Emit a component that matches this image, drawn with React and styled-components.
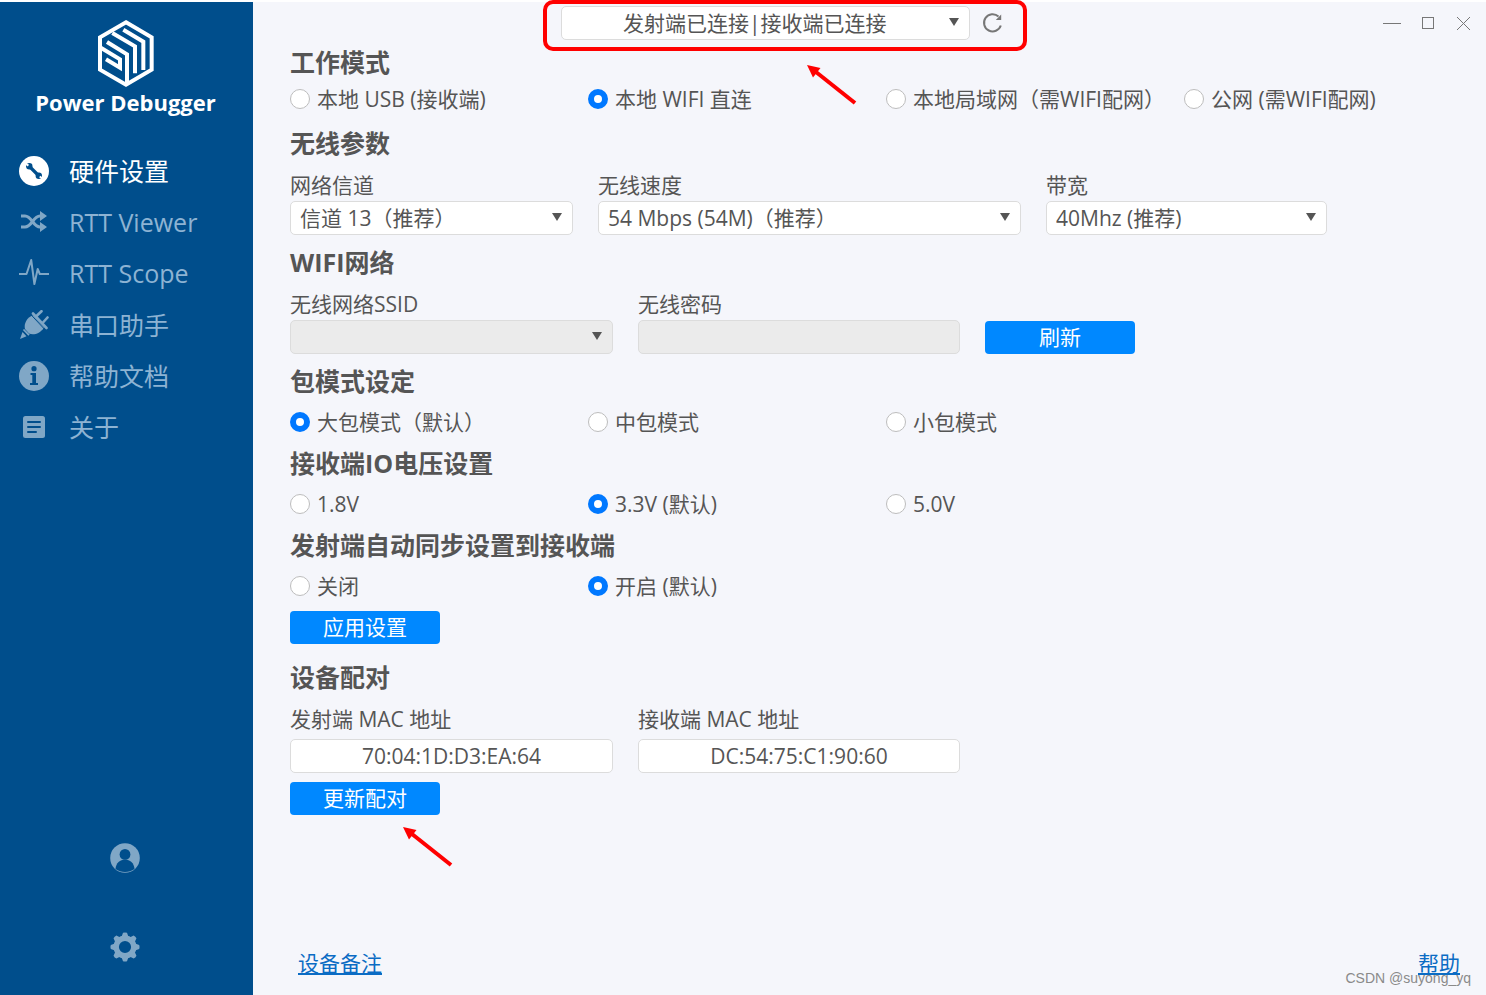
import React from "react";
import styled, { createGlobalStyle, css } from "styled-components";

const GlobalStyle = createGlobalStyle`
  *, *::before, *::after { box-sizing: border-box; }
  body {
    margin: 0;
    background: #fff;
    color: #555;
    font-family: "Open Sans", "Noto Sans CJK SC", sans-serif;
    font-size: 21px;
    line-height: 32px;
  }
  button, input, select { font: inherit; color: inherit; margin: 0; }
`;

const Window = styled.div`
  display: flex;
  min-height: 100vh;
  padding-top: 2px;
`;

/* ---------- Sidebar ---------- */

const Sidebar = styled.aside`
  flex: 0 0 253px;
  display: flex;
  flex-direction: column;
  background: #004e8c;
  color: #8db3d3;
`;

const Brand = styled.div`
  display: flex;
  flex-direction: column;
  align-items: center;
  padding: 18px 2px 0 0;
  color: #fff;
`;

const BrandName = styled.h1`
  margin: 0;
  font-size: 22px;
  line-height: 30px;
  font-weight: 700;
  white-space: nowrap;
`;

const Nav = styled.nav`
  display: grid;
  grid-auto-rows: 1fr;
  height: 308px;
  margin-top: 28px;
`;

const NavItem = styled.a`
  display: flex;
  align-items: center;
  gap: 20px;
  padding-left: 19px;
  font-size: 25px;
  text-decoration: none;
  white-space: nowrap;
  color: ${({ $active }) => ($active ? "#fff" : "#8db3d3")};

  svg {
    flex: none;
    color: ${({ $active }) => ($active ? "#fff" : "#80a7c6")};
  }
`;

const SidebarTools = styled.div`
  display: flex;
  flex-direction: column;
  align-items: center;
  gap: 59px;
  margin-top: auto;
  padding: 0 3px 33px 0;
`;

const IconButton = styled.button`
  display: flex;
  padding: 0;
  border: 0;
  background: none;
  color: ${({ $tone }) => $tone || "#80a7c6"};
  cursor: pointer;
`;

/* ---------- Main ---------- */

const Main = styled.main`
  flex: 1;
  min-width: 0;
  display: flex;
  flex-direction: column;
  background: #f5f6fb;
`;

const TitleBar = styled.header`
  display: flex;
  justify-content: space-between;
  align-items: flex-start;
  height: 40px;
  padding: 4px 13px 0 25%;
`;

const Connection = styled.div`
  position: relative;
  display: flex;
  align-items: center;
  gap: 12px;
`;

const Highlight = styled.div`
  position: absolute;
  inset: -6px -24px -11px -18px;
  border: 4px solid #f00;
  border-radius: 10px;
  pointer-events: none;
`;

const PointerArrow = styled.svg`
  position: absolute;
  left: ${({ $left }) => $left};
  top: ${({ $top }) => $top};
  pointer-events: none;
`;

const WindowControls = styled.div`
  display: flex;
  gap: 20px;
  padding-top: 8px;
`;

const Settings = styled.form`
  padding-left: 37px;
`;

const Section = styled.section`
  margin-bottom: ${({ $gap }) => $gap || "0"};
`;

const Heading = styled.h2`
  margin: 0;
  font-size: 25px;
  line-height: 40px;
  font-weight: 700;
`;

const RadioGroup = styled.div`
  display: grid;
  grid-template-columns: repeat(4, 1fr);
  max-width: 1192px;
  height: ${({ $compact }) => ($compact ? "34px" : "42px")};
  align-items: center;
`;

const RadioLabel = styled.label`
  display: flex;
  align-items: center;
  gap: 7px;
  white-space: nowrap;
`;

const RadioInput = styled.input`
  appearance: none;
  flex: none;
  width: 20px;
  height: 20px;
  border: 1px solid #bdbdbd;
  border-radius: 50%;
  background: #fff;

  &:checked {
    border: 6px solid #0078ff;
  }
`;

const FieldRow = styled.div`
  display: grid;
  grid-template-columns: ${({ $columns }) => $columns};
  max-width: ${({ $max }) => $max};
  gap: 25px;
  align-items: end;
  padding-top: 6px;
`;

const Field = styled.div`
  display: flex;
  flex-direction: column;
  gap: ${({ $gap }) => $gap || "0"};
  min-width: 0;
`;

const control = css`
  width: 100%;
  height: 34px;
  border: 1px solid #dcdcdc;
  border-radius: 5px;
  background: #fff;
  color: #555;
  opacity: 1;

  &:disabled { background: #ebebeb; }
`;

const TextInput = styled.input`
  ${control}
  padding: 0 8px;
  text-align: center;
`;

const SelectBox = styled.div`
  position: relative;
  display: flex;
  width: ${({ $width }) => $width || "100%"};

  &::after {
    content: "";
    position: absolute;
    right: 11px;
    top: 12px;
    border: 5px solid transparent;
    border-top: 8px solid #555;
    border-bottom: 0;
    pointer-events: none;
  }
`;

const SelectInput = styled.select`
  ${control}
  appearance: none;
  padding: ${({ $centered }) => ($centered ? "0 30px 0 8px" : "0 30px 0 9px")};
  text-align-last: ${({ $centered }) => ($centered ? "center" : "left")};
`;

const PrimaryButton = styled.button`
  position: relative;
  display: block;
  width: 150px;
  height: 33px;
  margin-top: ${({ $top }) => $top || "0"};
  padding: 0;
  border: 0;
  border-radius: 4px;
  background: #0088ff;
  color: #fff;
  line-height: 33px;
`;

const Footer = styled.footer`
  display: flex;
  justify-content: space-between;
  margin-top: auto;
  padding: 0 26px 16px 45px;
`;

const FooterLink = styled.a`
  color: #0b6cc4;
  text-underline-offset: 2px;
`;

const HelpArea = styled.div`
  position: relative;
`;

const Watermark = styled.span`
  position: absolute;
  right: -11px;
  top: 21px;
  font-family: "Liberation Sans", sans-serif;
  font-size: 14px;
  line-height: 20px;
  color: #8a8a8a;
  white-space: nowrap;
`;

/* ---------- Drawings ---------- */

const Logo = () => (
  <svg width="56" height="67" viewBox="0 0 168 201" fill="none" stroke="currentColor" strokeWidth="12" aria-hidden="true">
    <path d="M84 7 161 52V149L84 194 6 149V52Z" />
    <path d="M43 39 111 79V160" />
    <path d="M76 29 136 65V150" />
    <path d="M27 66 87 103V194" />
    <path d="M6 82 66 118V143L24 118" />
  </svg>
);

const WrenchIcon = () => (
  <svg width="30" height="30" viewBox="0 0 30 30" aria-hidden="true">
    <circle cx="15" cy="15" r="15" fill="currentColor" />
    <path d="M10 10 20 20" stroke="#004e8c" strokeWidth="3.2" />
    <circle cx="10.3" cy="10.3" r="3.2" fill="#004e8c" />
    <circle cx="19.8" cy="19.8" r="3.2" fill="#004e8c" />
    <path d="M6 7 9.4 9.6M20.7 20.5 24 23" stroke="currentColor" strokeWidth="2" />
  </svg>
);

const ShuffleIcon = () => (
  <svg width="30" height="30" viewBox="0 0 30 30" fill="none" stroke="currentColor" strokeWidth="3" aria-hidden="true">
    <path d="M2 9H6C13 9 14 20 21 20H23M2 20H6C13 20 14 9 21 9H23" />
    <path d="M21 4 28 9 21 14ZM21 15 28 20 21 25Z" fill="currentColor" stroke="none" />
  </svg>
);

const PulseIcon = () => (
  <svg width="30" height="30" viewBox="0 0 30 30" fill="none" stroke="currentColor" strokeWidth="2" strokeLinejoin="round" aria-hidden="true">
    <path d="M0 16H7.5L12.2 2 15.4 26 18.7 11 20.8 16H30" />
  </svg>
);

const PlugIcon = () => (
  <svg width="30" height="30" viewBox="0 0 30 30" fill="none" stroke="currentColor" aria-hidden="true">
    <path d="M14 5.5 25 17.5C21 24 14 25.5 10 23.5L6 19C4.500 14 8 7 14 5.500Z" fill="currentColor" stroke="none" />
    <path d="M14 3.500 27.500 18M17.500 6 22.500 1.200M24 12.500 28.500 7.500" strokeWidth="2.600" strokeLinecap="round" />
    <path d="M4.500 19.500 10 25.200" strokeWidth="1.800" />
    <path d="M3.500 22 7.500 26.200 1 29Z" fill="currentColor" stroke="none" />
    <path d="M12.500 5.300 25.500 19.200" stroke="#004e8c" strokeWidth="1" />
  </svg>
);

const InfoIcon = () => (
  <svg width="30" height="30" viewBox="0 0 30 30" aria-hidden="true">
    <circle cx="15" cy="15" r="15" fill="currentColor" />
    <circle cx="15" cy="7.7" r="2.6" fill="#004e8c" />
    <path d="M11.5 12H17V22H19V24H11V22H13.3V14H11.5Z" fill="#004e8c" />
  </svg>
);

const DocIcon = () => (
  <svg width="30" height="30" viewBox="0 0 30 30" aria-hidden="true">
    <rect x="4" y="4" width="22" height="22" rx="2.5" fill="currentColor" />
    <path d="M9 10H21M9 15H21M9 20H17" stroke="#004e8c" strokeWidth="2" strokeLinecap="round" />
  </svg>
);

const UserIcon = () => (
  <svg width="30" height="30" viewBox="0 0 30 30" aria-hidden="true">
    <circle cx="15" cy="15" r="14.8" fill="currentColor" />
    <circle cx="15" cy="11.4" r="5.4" fill="#004e8c" />
    <path d="M5.500 26C6 20 10 16.500 15 16.500S24 20 24.500 26C19 30 11 30 5.500 26Z" fill="#004e8c" />
  </svg>
);

const GearIcon = () => (
  <svg width="30" height="30" viewBox="0 0 30 30" fill="none" stroke="currentColor" aria-hidden="true">
    <circle cx="15" cy="15" r="8.800" strokeWidth="5.400" />
    {[0, 45, 90, 135].map((angle) => (
      <path
        key={angle}
        d="M11.500 5 13 .8Q15 0 17 .8L18.500 5ZM11.500 25 13 29.200Q15 30 17 29.200L18.500 25Z"
        transform={`rotate(${angle} 15 15)`}
        fill="currentColor"
        stroke="none"
      />
    ))}
  </svg>
);

const RefreshIcon = () => (
  <svg width="21" height="22" viewBox="0 0 21 22" fill="none" stroke="currentColor" strokeWidth="2" aria-hidden="true">
    <path d="M18.800 13.500A8.600 8.600 0 1 1 16.500 4.500" />
    <path d="M19.200 2.500V8H13.800Z" fill="currentColor" stroke="none" />
  </svg>
);

const MinimizeIcon = () => (
  <svg width="18" height="18" viewBox="0 0 18 18" stroke="currentColor" aria-hidden="true">
    <path d="M0 9.5H18" />
  </svg>
);

const MaximizeIcon = () => (
  <svg width="14" height="18" viewBox="0 0 14 18" fill="none" stroke="currentColor" aria-hidden="true">
    <rect x="1.5" y="3.5" width="11" height="11" />
  </svg>
);

const CloseIcon = () => (
  <svg width="18" height="18" viewBox="0 0 18 18" stroke="currentColor" aria-hidden="true">
    <path d="M2 3 15 16M15 3 2 16" />
  </svg>
);

const Arrow = ({ left, top }) => (
  <PointerArrow $left={left} $top={top} width="50" height="40" viewBox="0 0 50 40" aria-hidden="true">
    <path d="M48 38 9 7" stroke="#f00" strokeWidth="4" />
    <path d="M0 0 13.5 3 6 12.5Z" fill="#f00" />
  </PointerArrow>
);

/* ---------- Composed parts ---------- */

const Radio = ({ name, children, checked }) => (
  <RadioLabel>
    <RadioInput type="radio" name={name} defaultChecked={checked} />
    {children}
  </RadioLabel>
);

const Select = ({ id, value, centered, disabled, width, label }) => (
  <SelectBox $width={width}>
    <SelectInput id={id} $centered={centered} disabled={disabled} aria-label={label}>
      <option>{value}</option>
    </SelectInput>
  </SelectBox>
);

const navItems = [
  { label: "硬件设置", Icon: WrenchIcon, active: true },
  { label: "RTT Viewer", Icon: ShuffleIcon },
  { label: "RTT Scope", Icon: PulseIcon },
  { label: "串口助手", Icon: PlugIcon },
  { label: "帮助文档", Icon: InfoIcon },
  { label: "关于", Icon: DocIcon },
];

export default function App() {
  return (
    <>
      <GlobalStyle />
      <Window>
        <Sidebar>
          <Brand>
            <Logo />
            <BrandName>Power Debugger</BrandName>
          </Brand>
          <Nav>
            {navItems.map(({ label, Icon, active }) => (
              <NavItem key={label} href="#" $active={active}>
                <Icon />
                {label}
              </NavItem>
            ))}
          </Nav>
          <SidebarTools>
            <IconButton type="button" aria-label="用户"><UserIcon /></IconButton>
            <IconButton type="button" aria-label="设置"><GearIcon /></IconButton>
          </SidebarTools>
        </Sidebar>

        <Main>
          <TitleBar>
            <Connection>
              <Select width="409px" centered label="连接状态" value="发射端已连接|接收端已连接" />
              <IconButton type="button" $tone="#777" aria-label="刷新连接"><RefreshIcon /></IconButton>
              <Highlight />
              <Arrow left="246px" top="59px" />
            </Connection>
            <WindowControls>
              <IconButton type="button" $tone="#777" aria-label="最小化"><MinimizeIcon /></IconButton>
              <IconButton type="button" $tone="#777" aria-label="最大化"><MaximizeIcon /></IconButton>
              <IconButton type="button" $tone="#777" aria-label="关闭"><CloseIcon /></IconButton>
            </WindowControls>
          </TitleBar>

          <Settings>
            <Section $gap="7px">
              <Heading>工作模式</Heading>
              <RadioGroup $compact>
                <Radio name="mode">本地 USB (接收端)</Radio>
                <Radio name="mode" checked>本地 WIFI 直连</Radio>
                <Radio name="mode">本地局域网（需WIFI配网）</Radio>
                <Radio name="mode">公网 (需WIFI配网)</Radio>
              </RadioGroup>
            </Section>

            <Section $gap="7px">
              <Heading>无线参数</Heading>
              <FieldRow $columns="283fr 423fr 281fr" $max="1037px">
                <Field>
                  <label htmlFor="channel">网络信道</label>
                  <Select id="channel" value="信道 13（推荐）" />
                </Field>
                <Field>
                  <label htmlFor="speed">无线速度</label>
                  <Select id="speed" value="54 Mbps (54M)（推荐）" />
                </Field>
                <Field>
                  <label htmlFor="bandwidth">带宽</label>
                  <Select id="bandwidth" value="40Mhz (推荐)" />
                </Field>
              </FieldRow>
            </Section>

            <Section $gap="7px">
              <Heading>WIFI网络</Heading>
              <FieldRow $columns="323fr 322fr 150fr" $max="845px">
                <Field>
                  <label htmlFor="ssid">无线网络SSID</label>
                  <Select id="ssid" value="" disabled />
                </Field>
                <Field>
                  <label htmlFor="password">无线密码</label>
                  <TextInput id="password" disabled />
                </Field>
                <PrimaryButton type="button">刷新</PrimaryButton>
              </FieldRow>
            </Section>

            <Section>
              <Heading>包模式设定</Heading>
              <RadioGroup>
                <Radio name="packet" checked>大包模式（默认）</Radio>
                <Radio name="packet">中包模式</Radio>
                <Radio name="packet">小包模式</Radio>
              </RadioGroup>
            </Section>

            <Section>
              <Heading>接收端IO电压设置</Heading>
              <RadioGroup>
                <Radio name="voltage">1.8V</Radio>
                <Radio name="voltage" checked>3.3V (默认)</Radio>
                <Radio name="voltage">5.0V</Radio>
              </RadioGroup>
            </Section>

            <Section $gap="13px">
              <Heading>发射端自动同步设置到接收端</Heading>
              <RadioGroup>
                <Radio name="sync">关闭</Radio>
                <Radio name="sync" checked>开启 (默认)</Radio>
              </RadioGroup>
              <PrimaryButton type="button" $top="4px">应用设置</PrimaryButton>
            </Section>

            <Section>
              <Heading>设备配对</Heading>
              <FieldRow $columns="323fr 322fr" $max="670px">
                <Field $gap="4px">
                  <label htmlFor="tx-mac">发射端 MAC 地址</label>
                  <TextInput id="tx-mac" defaultValue="70:04:1D:D3:EA:64" />
                </Field>
                <Field $gap="4px">
                  <label htmlFor="rx-mac">接收端 MAC 地址</label>
                  <TextInput id="rx-mac" defaultValue="DC:54:75:C1:90:60" />
                </Field>
              </FieldRow>
              <PrimaryButton type="button" $top="9px">
                更新配对
                <Arrow left="113px" top="45px" />
              </PrimaryButton>
            </Section>
          </Settings>

          <Footer>
            <FooterLink href="#">设备备注</FooterLink>
            <HelpArea>
              <FooterLink href="#">帮助</FooterLink>
              <Watermark>CSDN @suyong_yq</Watermark>
            </HelpArea>
          </Footer>
        </Main>
      </Window>
    </>
  );
}
